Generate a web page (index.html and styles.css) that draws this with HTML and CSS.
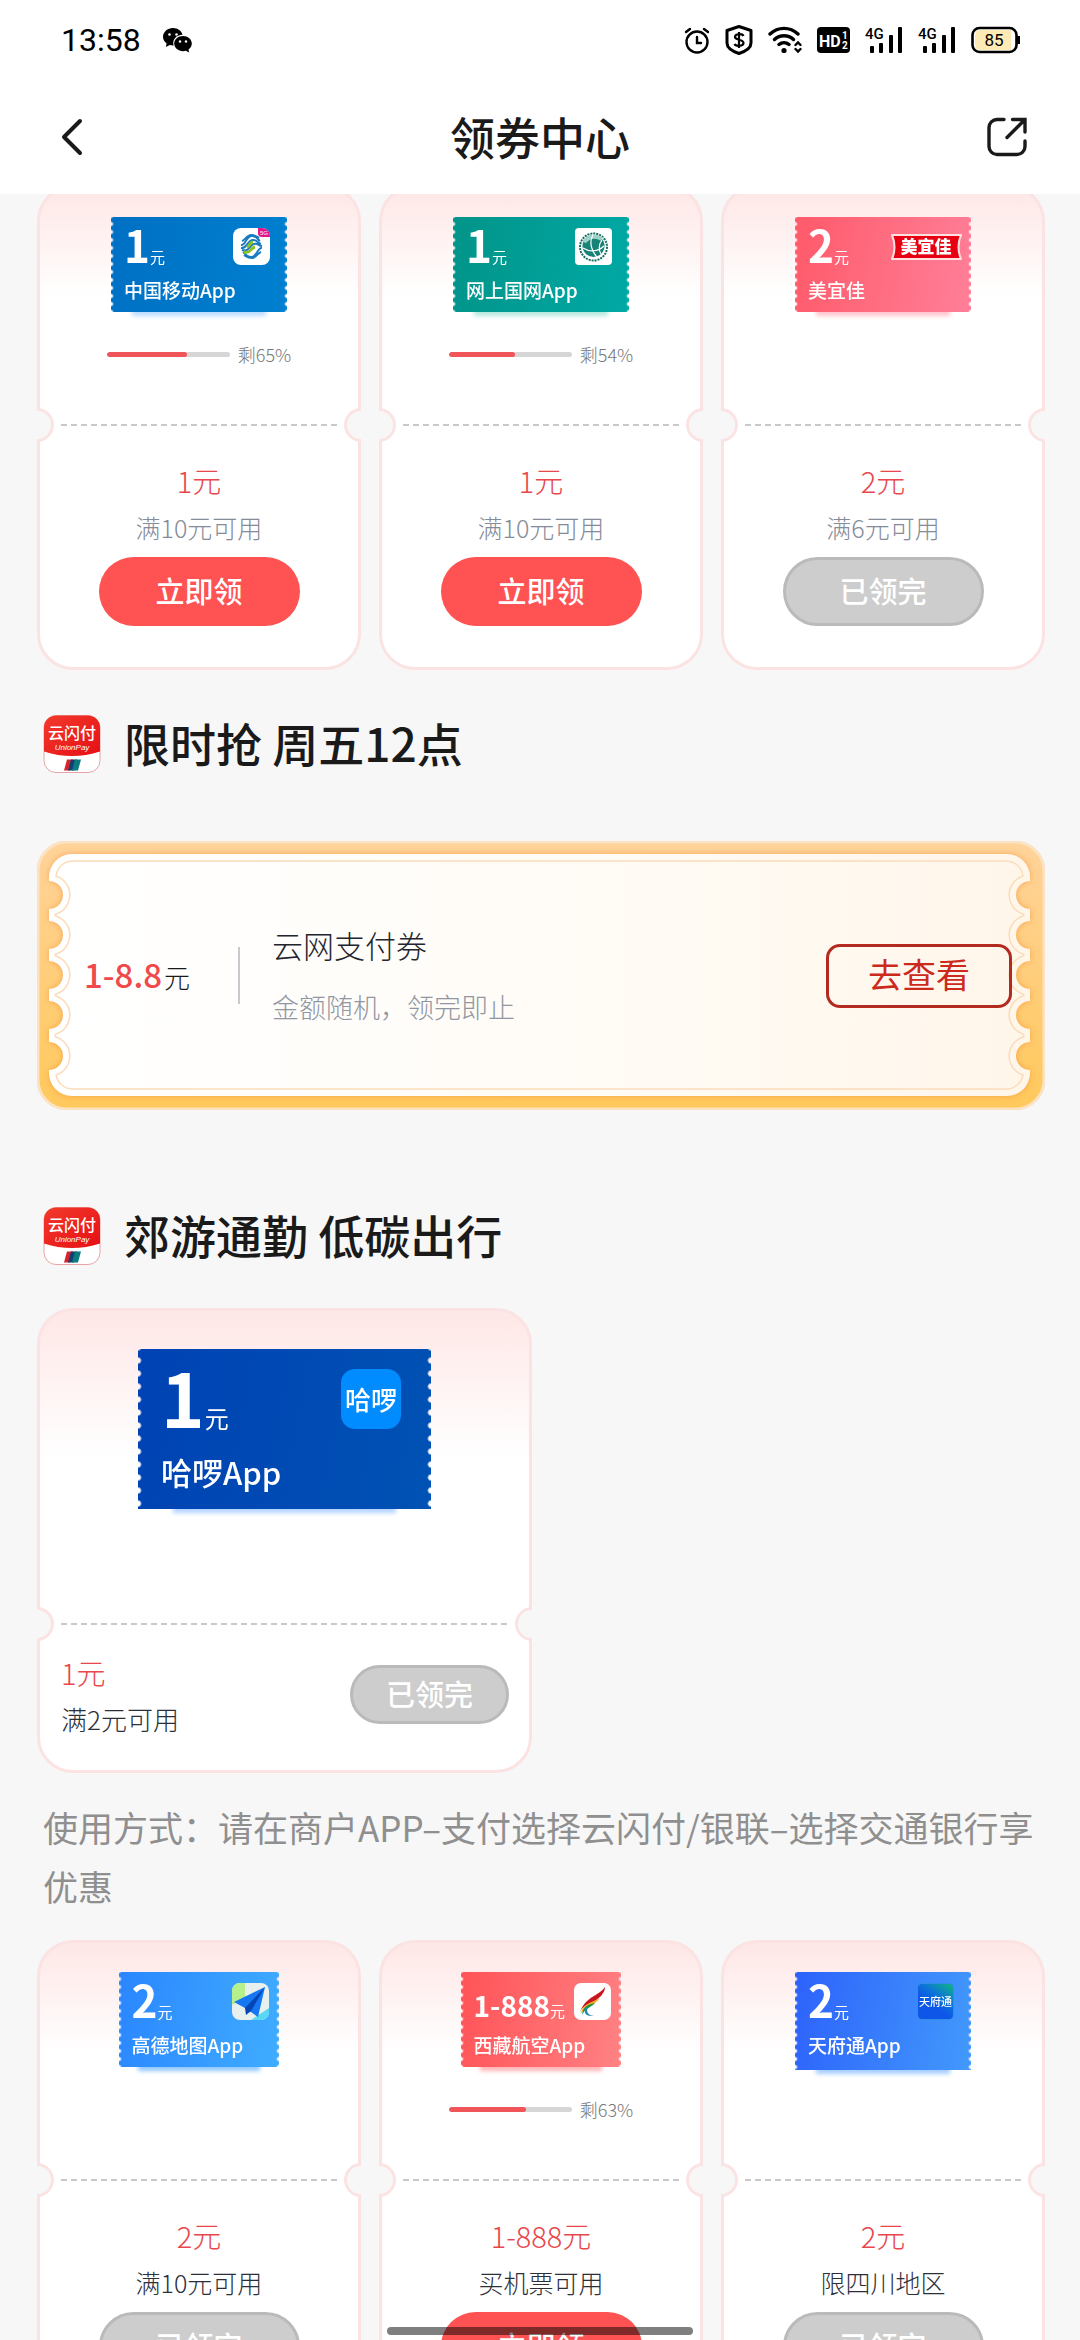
FILE: index.html
```html
<!DOCTYPE html>
<html lang="zh-CN">
<head>
<meta charset="utf-8">
<meta name="viewport" content="width=device-width, initial-scale=1">
<title>领券中心</title>
<link rel="stylesheet" href="styles.css">
</head>
<body>
<svg width="0" height="0" class="defs" aria-hidden="true">
  <defs>
    <linearGradient id="redTop" x1="0" y1="0" x2="1" y2="1"><stop offset="0" stop-color="#f23a2c"/><stop offset="1" stop-color="#e60f14"/></linearGradient>
    <symbol id="unionpay" viewBox="0 0 58 59">
      <rect x="1" y="1" width="56" height="57" rx="12" fill="#fff" stroke="#e9a5a5" stroke-width="1"/>
      <path d="M1 37V13A12 12 0 0 1 13 1H45A12 12 0 0 1 57 13V37Q29 46 1 37Z" fill="url(#redTop)"/>
      <path d="M24 45H30L27 56H21Z" fill="#d8232f"/><path d="M28 45H34L31 56H25Z" fill="#14406f"/><path d="M32 45H38L35 56H29Z" fill="#0b7b80"/>
      <text x="29" y="24" font-size="16" font-weight="500" text-anchor="middle" fill="#fff" class="svg-text">云闪付</text>
      <text x="29" y="35" font-size="8" font-style="italic" text-anchor="middle" fill="#fff" class="svg-latin">UnionPay</text>
    </symbol>
    <symbol id="signal" viewBox="0 0 38 28">
      <text x="0" y="13" font-size="15" font-weight="500" class="svg-roboto">4G</text>
      <rect x="5" y="20" width="4" height="7" rx="1"/><rect x="14" y="17" width="4" height="10" rx="1"/><rect x="24" y="9" width="4" height="18" rx="1"/><rect x="33" y="1" width="4" height="26" rx="1"/>
    </symbol>
  </defs>
</svg>

<div class="app">
  <header class="top">
    <div class="status">
      <span class="clock">13:58</span>
      <svg class="wechat" width="29" height="26" viewBox="0 0 29 26" aria-hidden="true"><path d="M10 1C4.500 1 0 5 0 9.800c0 2.700 1.400 5 3.600 6.600L2.800 20l4-2c1 .300 2 .400 3 .400h.800C9 12.500 13.500 7.800 19.500 7.700 18.500 3.800 14.600 1 10 1Z"/><path d="M20 9c-4.900 0-8.800 3.400-8.800 7.600s4 7.600 8.800 7.600c1 0 2-.100 2.900-.400l3.300 1.700-.700-2.900c2-1.400 3.300-3.600 3.300-6C28.800 12.400 24.900 9 20 9Z"/><g fill="#fff"><circle cx="6.500" cy="7.500" r="1.300"/><circle cx="13.500" cy="7.500" r="1.300"/><circle cx="17" cy="14.500" r="1.200"/><circle cx="23" cy="14.500" r="1.200"/></g></svg>
      <div class="tray">
        <svg width="26" height="28" viewBox="0 0 26 28" fill="none" stroke="#000" stroke-width="2.400" stroke-linecap="round"><circle cx="13" cy="16" r="10.500"/><path d="M2 6 6 3M24 6 20 3M13 11V17H17"/></svg>
        <svg width="28" height="30" viewBox="0 0 28 30" fill="none" stroke="#000" stroke-width="3" stroke-linejoin="round"><path d="M14 1.500 26 5.500V18C26 23 20 26.500 14 28.500 8 26.500 2 23 2 18V5.500Z"/><path d="M18.500 11C17.500 8.500 10 8.500 10 12 10 15.500 18.500 14 18.500 18 18.500 21.500 10.500 21.500 9.500 19M14 7V23" stroke-width="2.200"/></svg>
        <svg width="34" height="28" viewBox="0 0 34 28" fill="none" stroke="#000" stroke-width="3.400" stroke-linecap="round"><path d="M2 8C10 .500 22 .500 30 8M6.500 13.500C12 8.500 20 8.500 25.500 13.500M11 18.500C14 16 18 16 21 18.500"/><circle cx="16" cy="24.500" r="2.600" fill="#000" stroke="none"/><path d="M27.500 19 30 16.500 32.500 19M27.500 23 30 25.500 32.500 23" stroke-width="2.400"/></svg>
        <svg width="33" height="28" viewBox="0 0 33 28"><rect y="1" width="33" height="26" rx="4"/><text x="2" y="21" font-size="16" font-weight="700" fill="#fff" class="svg-roboto">HD</text><text x="25" y="13" font-size="10" font-weight="700" fill="#fff" class="svg-roboto">1</text><text x="25" y="23" font-size="10" font-weight="700" fill="#fff" class="svg-roboto">2</text></svg>
        <svg width="38" height="28"><use href="#signal"/></svg>
        <svg width="38" height="28"><use href="#signal"/></svg>
        <svg width="51" height="28" viewBox="0 0 51 28"><rect x="1.500" y="2" width="44" height="24" rx="7" fill="#fff" stroke="#000" stroke-width="2.600"/><path d="M9 4H40V24H9A5 5 0 0 1 4 19V9A5 5 0 0 1 9 4Z" fill="#fdeab5"/><path d="M47.500 10V18" stroke="#000" stroke-width="3"/><text x="23" y="20" font-size="17" text-anchor="middle" class="svg-roboto">85</text></svg>
      </div>
    </div>
    <nav class="nav">
      <button class="icon-btn back" aria-label="返回"><svg width="22" height="38" viewBox="0 0 22 38" fill="none" stroke="#1a1a1a" stroke-width="4" stroke-linecap="round" stroke-linejoin="round"><path d="M19 3 3 19 19 35"/></svg></button>
      <h1 class="title">领券中心</h1>
      <button class="icon-btn share" aria-label="分享"><svg width="40" height="40" viewBox="0 0 40 40" fill="none" stroke="#1a1a1a" stroke-width="3.400" stroke-linecap="round"><path d="M17 2.500H10A8 8 0 0 0 2 10.500V29.500A8 8 0 0 0 10 37.500H30A8 8 0 0 0 38 29.500V24M25.500 2.500H38V15M37 3.500 20 20.500"/></svg></button>
    </nav>
  </header>

  <main class="content">
    <div class="grid grid-first">
      <article class="card">
        <div class="card-top">
          <div class="coupon cmcc">
            <div class="face"><div class="face-row"><span class="price">1<small>元</small></span>
              <svg class="logo" width="37" height="37" viewBox="0 0 37 37"><rect width="37" height="37" rx="8" fill="#fff"/><path d="M25 0H29A8 8 0 0 1 37 8V9H29A4 4 0 0 1 25 5Z" fill="#e4148c"/><text x="27" y="7" font-size="6" fill="#fff" class="svg-latin">5G</text><g fill="none" stroke-width="2"><path d="M8 17C12 18 13 9 18 8S24 11 27 13M9 13C12 12 14 7 18 7S23 8 26 10M29 20C25 19 24 28 19 29S13 26 10 24M28 24C25 25 23 30 19 30S14 29 11 27" stroke="#1a7cc0"/><path d="M8 20C14 21 14 13 19 12S24 15 28 16M9 22C17 24 16 17 21 16S25 18 29 18" stroke="#1a7cc0"/><path d="M11 24C18 26 17 20 22 19" stroke="#8cc220" stroke-width="3"/><path d="M14 19C17 18 16 15 20 14" stroke="#8cc220" stroke-width="3"/></g></svg></div>
              <div class="brand">中国移动App</div></div>
          </div>
          <div class="stock"><progress class="bar" max="100" value="65" aria-label="剩余"></progress><span>剩65%</span></div>
        </div>
        <hr class="tear">
        <div class="card-bottom"><div class="amount">1元</div><div class="rule">满10元可用</div><button class="get">立即领</button></div>
      </article>
      <article class="card">
        <div class="card-top">
          <div class="coupon grid-co">
            <div class="face"><div class="face-row"><span class="price">1<small>元</small></span>
              <svg class="logo" width="37" height="37" viewBox="0 0 37 37"><rect width="37" height="37" rx="4" fill="#fff"/><circle cx="18.500" cy="19" r="13.500" fill="none" stroke="#126a60" stroke-width="2" stroke-dasharray="2 1"/><circle cx="18.500" cy="18" r="11" fill="#178377"/><path d="M9 14Q17 5 27 11" stroke="#9ed1c7" stroke-width="4" fill="none"/><path d="M18 7C13 15 18 25 22 29M8 20C14 24 23 24 29 18M27 12C23 17 24 23 26 26" stroke="#fff" stroke-width="1.200" fill="none"/></svg></div>
              <div class="brand">网上国网App</div></div>
          </div>
          <div class="stock"><progress class="bar" max="100" value="54" aria-label="剩余"></progress><span>剩54%</span></div>
        </div>
        <hr class="tear">
        <div class="card-bottom"><div class="amount">1元</div><div class="rule">满10元可用</div><button class="get">立即领</button></div>
      </article>
      <article class="card">
        <div class="card-top">
          <div class="coupon meiyijia">
            <div class="face"><div class="face-row"><span class="price">2<small>元</small></span>
              <svg class="logo" width="73" height="37" viewBox="0 0 73 37"><path d="M2 7H71Q66 19 71 31H2Q7 19 2 7Z" fill="#e60012" stroke="#ffe0e0" stroke-width="2" stroke-linejoin="round"/><text x="36" y="25" font-size="17" font-weight="900" text-anchor="middle" fill="#fff" class="svg-text">美宜佳</text></svg></div>
              <div class="brand">美宜佳</div></div>
          </div>
        </div>
        <hr class="tear">
        <div class="card-bottom"><div class="amount">2元</div><div class="rule">满6元可用</div><button class="get sold" disabled>已领完</button></div>
      </article>
    </div>

    <h2 class="section"><svg width="58" height="60"><use href="#unionpay"/></svg><span>限时抢 周五12点</span></h2>

    <section class="gold">
      <svg class="gold-bg" viewBox="0 0 1006 269" preserveAspectRatio="none" aria-hidden="true">
        <defs>
          <linearGradient id="goldFill" x1="0" y1="0" x2="0" y2="1"><stop offset="0" stop-color="#ffd39a"/><stop offset="1" stop-color="#ffc95c"/></linearGradient>
          <linearGradient id="paper"><stop offset="0" stop-color="#fff"/><stop offset=".5" stop-color="#fffcf7"/><stop offset="1" stop-color="#fff6ea"/></linearGradient>
          <filter id="soft" x="-5%" y="-10%" width="110%" height="120%"><feDropShadow dx="0" dy="0" stdDeviation="3" flood-color="#f08a30" flood-opacity=".6"/></filter>
        </defs>
        <rect x="1" y="1" width="1004" height="267" rx="29" fill="url(#goldFill)" stroke="#fbe2c2" stroke-width="3"/>
        <path filter="url(#soft)" fill="url(#paper)" d="M35 13H968A23 23 0 0 1 991 36V40A14 14 0 0 0 991 68V80A14 14 0 0 0 991 108V120A14 14 0 0 0 991 148V160A14 14 0 0 0 991 188V201A14 14 0 0 0 991 229V232A23 23 0 0 1 968 255H35A23 23 0 0 1 12 232V229A14 14 0 0 0 12 201V188A14 14 0 0 0 12 160V148A14 14 0 0 0 12 120V108A14 14 0 0 0 12 80V68A14 14 0 0 0 12 40V36A23 23 0 0 1 35 13Z"/>
        <path fill="none" stroke="#fbdcbb" stroke-width="1.500" d="M35 20H968A17 17 0 0 1 984 35A20 20 0 0 0 984 73L985 74L984 75A20 20 0 0 0 984 113L985 114L984 115A20 20 0 0 0 984 153L985 154L984 155A20 20 0 0 0 984 193L985 195L984 196A20 20 0 0 0 984 234A17 17 0 0 1 968 248H35A17 17 0 0 1 19 234A20 20 0 0 0 19 196L18 195L19 193A20 20 0 0 0 19 155L18 154L19 153A20 20 0 0 0 19 115L18 114L19 113A20 20 0 0 0 19 75L18 74L19 73A20 20 0 0 0 19 35A17 17 0 0 1 35 20Z"/>
      </svg>
      <div class="gold-price"><strong>1-8.8</strong><span>元</span></div>
      <div class="gold-info"><div class="gold-name">云网支付券</div><div class="gold-desc">金额随机，领完即止</div></div>
      <button class="view">去查看</button>
    </section>

    <h2 class="section section-second"><svg width="58" height="60"><use href="#unionpay"/></svg><span>郊游通勤 低碳出行</span></h2>

    <article class="card card-wide">
      <div class="card-top">
        <div class="coupon coupon-large hello">
          <div class="face"><div class="face-row"><span class="price">1<small>元</small></span><span class="hello-logo">哈啰</span></div>
            <div class="brand">哈啰App</div></div>
        </div>
      </div>
      <hr class="tear">
      <div class="card-bottom dark"><div><div class="amount">1元</div><div class="rule">满2元可用</div></div><button class="get sold" disabled>已领完</button></div>
    </article>

    <p class="note">使用方式：请在商户APP–支付选择云闪付/银联–选择交通银行享优惠</p>

    <div class="grid">
      <article class="card">
        <div class="card-top">
          <div class="coupon coupon-small amap">
            <div class="face"><div class="face-row"><span class="price">2<small>元</small></span>
              <svg class="logo" width="37" height="37" viewBox="0 0 37 37"><rect width="37" height="37" rx="8" fill="#e8f0ee"/><path d="M8 0H13V15L0 22V8A8 8 0 0 1 8 0Z" fill="#b6f08b"/><path d="M19 37 37 25V29A8 8 0 0 1 29 37Z" fill="#57d8f5"/><path d="M33 4 2 19 13 25 26 34Z" fill="#1677f2"/><path d="M33 4 13 25 14 32 19 28Z" fill="#0645b5"/></svg></div>
              <div class="brand">高德地图App</div></div>
          </div>
        </div>
        <hr class="tear">
        <div class="card-bottom dark"><div class="amount">2元</div><div class="rule">满10元可用</div><button class="get sold" disabled>已领完</button></div>
      </article>
      <article class="card">
        <div class="card-top">
          <div class="coupon coupon-small tibet">
            <div class="face"><div class="face-row"><span class="price price-range">1-888<small>元</small></span>
              <svg class="logo" width="37" height="37" viewBox="0 0 37 37"><rect width="37" height="37" rx="7" fill="#fff"/><path d="M31 4C25 13 12 13 6 29 10 20 21 20 27 13 30 9 31 7 31 4Z" fill="#c8161d"/><path d="M26 15C18 20 9 20 7 31 11 23 20 23 26 15Z" fill="#f4a71c"/><path d="M21 20C13 22 9 24 8 32 11 25 18 24 21 20Z" fill="#16934c"/><path d="M14 24C8 28 11 34 20 33 13 32 12 28 14 24Z" fill="#1789b0"/></svg></div>
              <div class="brand">西藏航空App</div></div>
          </div>
          <div class="stock"><progress class="bar" max="100" value="63" aria-label="剩余"></progress><span>剩63%</span></div>
        </div>
        <hr class="tear">
        <div class="card-bottom dark"><div class="amount">1-888元</div><div class="rule">买机票可用</div><button class="get">立即领</button></div>
      </article>
      <article class="card">
        <div class="card-top">
          <div class="coupon tianfu">
            <div class="face"><div class="face-row"><span class="price">2<small>元</small></span><span class="tianfu-logo">天府通</span></div>
              <div class="brand">天府通App</div></div>
          </div>
        </div>
        <hr class="tear">
        <div class="card-bottom dark"><div class="amount">2元</div><div class="rule">限四川地区</div><button class="get sold" disabled>已领完</button></div>
      </article>
    </div>
  </main>
  <div class="home-indicator"></div>
</div>
</body>
</html>
```
FILE: styles.css
```css
*,
*::before,
*::after { box-sizing: border-box; }

body {
  margin: 0;
  background: #f7f7f7;
  color: #1a1a1a;
  font-family: "Noto Sans CJK SC", sans-serif;
}

h1, h2, p, hr { margin: 0; }

button {
  margin: 0;
  padding: 0;
  border: 0;
  background: none;
  font-family: inherit;
}

.defs { position: absolute; }
.svg-text { font-family: "Noto Sans CJK SC", sans-serif; }
.svg-latin { font-family: "Liberation Sans", sans-serif; }
.svg-roboto { font-family: Roboto, sans-serif; }

.app {
  position: relative;
  display: flex;
  flex-direction: column;
  height: 100vh;
  overflow: hidden;
}

/* Status bar and title */
.top {
  flex: none;
  background: #fff;
}

.status {
  display: flex;
  align-items: center;
  height: 80px;
  padding: 0 58px 0 61px;
}

.clock {
  font-family: Roboto, sans-serif;
  font-size: 32px;
  line-height: 40px;
  color: #000;
}

.wechat { margin-left: 22px; }

.tray {
  display: flex;
  align-items: center;
  gap: 15px;
  margin-left: auto;
}

.nav {
  display: flex;
  align-items: center;
  justify-content: space-between;
  height: 114px;
  padding: 0 53px;
}

.icon-btn { display: flex; width: 48px; }
.back { padding-left: 8px; }
.share { justify-content: flex-end; }

.title {
  font-size: 45px;
  line-height: 60px;
  font-weight: 500;
}

/* Page body */
.content {
  flex: 1;
  min-height: 0;
  overflow: hidden;
  padding: 0 35px 0 37px;
}

.grid {
  display: grid;
  grid-template-columns: repeat(3, 1fr);
  gap: 18px;
}

.grid-first { margin-top: -9px; }

/* Ticket card */
.card {
  border: 3px solid #fce3e3;
  border-radius: 36px;
  background: linear-gradient(#fee7e6, #fff 110px);
}

.card-top {
  display: flex;
  flex-direction: column;
  align-items: center;
  height: 236px;
  padding-top: 29px;
}

.tear {
  position: relative;
  height: 2px;
  margin: 0 21px;
  border: 0;
  overflow: visible;
  background: repeating-linear-gradient(90deg, #c9c9c9 0 6px, transparent 6px 10px);
}

.tear::before,
.tear::after {
  content: "";
  position: absolute;
  top: -16px;
  width: 17px;
  height: 34px;
  border: 3px solid #fce3e3;
  background: #f7f7f7;
}

.tear::before {
  left: -24px;
  border-left: 0;
  border-radius: 0 17px 17px 0;
}

.tear::after {
  right: -24px;
  border-right: 0;
  border-radius: 17px 0 0 17px;
}

.card-bottom {
  display: flex;
  flex-direction: column;
  align-items: center;
  padding: 32px 0 41px;
  font-weight: 300;
}

.amount {
  font-size: 29px;
  line-height: 44px;
  color: #e8474c;
}

.rule {
  margin-top: 5px;
  font-size: 25px;
  line-height: 40px;
  color: #858b98;
}

.dark .rule { color: #2b2f3a; }

.get {
  width: 201px;
  height: 69px;
  margin-top: 10px;
  padding-bottom: 4px;
  border-radius: 35px;
  background: #ff5253;
  color: #fff;
  font-size: 29px;
  font-weight: 500;
  line-height: 40px;
}

.get.sold {
  border: 3px solid #bababa;
  background: #cdcdcd;
}

.stock {
  display: flex;
  align-items: center;
  gap: 8px;
  margin-top: 27px;
  font-size: 18px;
  font-weight: 300;
  line-height: 30px;
  color: #777;
}

.bar {
  width: 123px;
  height: 5px;
  border: 0;
  border-radius: 3px;
  appearance: none;
  overflow: hidden;
  background: #d6d6d6;
}

.bar::-webkit-progress-bar { background: #d6d6d6; }
.bar::-webkit-progress-value { background: #f0555a; border-radius: 3px; }

/* Coupon picture */
.coupon {
  position: relative;
  flex: none;
  width: 176px;
  height: 95px;
}

.coupon-small { width: 161px; }

.coupon::after {
  content: "";
  position: absolute;
  z-index: 0;
  left: 12%;
  right: 12%;
  bottom: -4px;
  height: 14px;
  background: var(--glow);
  filter: blur(2px);
}

.face {
  position: relative;
  z-index: 1;
  height: 100%;
  padding: 11px 17px 0 13px;
  background: linear-gradient(100deg, var(--from), var(--to));
  color: #fff;
  -webkit-mask:
    radial-gradient(circle at 0 50%, transparent 1px, #000 3px) 0 3px / 51% 8px repeat-y,
    radial-gradient(circle at 100% 50%, transparent 1px, #000 3px) 100% 3px / 51% 8px repeat-y;
}

.coupon-small .face { padding-right: 11px; }
.cmcc { --from: #0070c4; --to: #0080d0; --glow: #bcdcff; }
.grid-co { --from: #029489; --to: #00a9a5; --glow: #b5e8dd; }
.meiyijia { --from: #ff5a6a; --to: #ff7f98; --glow: #ffc4cc; }
.hello { --from: #0042b4; --to: #0052b4; --glow: #b3d3ff; }
.amap { --from: #2a86ff; --to: #40adff; --glow: #8fc8ff; }
.tibet { --from: #ff5357; --to: #ff8284; --glow: #ffb3b5; }
.tianfu { --from: #2d62fb; --to: #4299fc; --glow: #a5cdff; }
.meiyijia .face { padding-right: 8px; }
.tianfu { height: 98px; }

.face-row {
  display: flex;
  align-items: flex-start;
  justify-content: space-between;
  height: 37px;
}

.price {
  font-size: 44px;
  font-weight: 700;
  line-height: 33px;
  white-space: nowrap;
}

.price small {
  font-size: 15px;
  font-weight: 400;
  line-height: 1;
}

.price-range {
  padding-top: 6px;
  font-size: 28px;
}

.logo { display: block; flex: none; }

.brand {
  margin-top: 13px;
  font-size: 19px;
  font-weight: 500;
  line-height: 24px;
  white-space: nowrap;
}

.tianfu-logo {
  width: 37px;
  height: 37px;
  border: 1px solid #2f8fe6;
  border-radius: 5px;
  background: linear-gradient(35deg, #0d56e8 40%, #0b77d6 65%, #10b581);
  font-size: 11px;
  font-weight: 500;
  line-height: 35px;
  text-align: center;
  white-space: nowrap;
}

/* Section titles */
.section {
  display: flex;
  align-items: center;
  gap: 23px;
  margin: 44px 0 0 6px;
  font-size: 46px;
  font-weight: 500;
  line-height: 60px;
}

.section span { margin-top: -4px; }
.section-second { margin-top: 96px; }

/* Golden voucher */
.gold {
  position: relative;
  display: flex;
  align-items: center;
  height: 269px;
  margin-top: 67px;
  padding: 0 33px 0 47px;
}

.gold-bg {
  position: absolute;
  inset: 0;
  width: 100%;
  height: 100%;
}

.gold-price,
.gold-info,
.view { position: relative; }

.gold-price {
  display: flex;
  align-items: baseline;
  gap: 2px;
  width: 156px;
  border-right: 2px solid #c9cacd;
  line-height: 54px;
}

.gold-price strong {
  font-size: 33px;
  font-weight: 500;
  color: #ee4a4c;
}

.gold-price span { font-size: 26px; font-weight: 300; }
.gold-info { margin-left: 32px; font-weight: 300; }
.gold-name { font-size: 31px; line-height: 56px; color: #22252e; }
.gold-desc { margin-top: 6px; font-size: 27px; line-height: 56px; color: #9196a2; }

.view {
  width: 186px;
  height: 64px;
  margin-left: auto;
  padding-bottom: 3px;
  border: 3px solid #b32a20;
  border-radius: 14px;
  color: #cc2a1d;
  font-size: 34px;
  line-height: 54px;
}

/* Wide ticket */
.card-wide {
  width: 495px;
  max-width: 100%;
  margin-top: 42px;
  background: linear-gradient(#fee7e6, #fff 145px);
}

.card-wide .card-top { height: 312px; padding-top: 38px; }
.card-wide .card-bottom {
  flex-direction: row;
  align-items: center;
  justify-content: space-between;
  padding: 25px 20px 31px 21px;
}
.card-wide .rule { font-size: 26px; }
.card-wide .get { width: 159px; height: 59px; margin-top: 0; }

.coupon-large { width: 293px; height: 160px; }
.coupon-large .face {
  padding: 20px 30px 0 23px;
  -webkit-mask:
    radial-gradient(circle at 0 50%, transparent 2px, #000 4px) 0 5px / 51% 13px repeat-y,
    radial-gradient(circle at 100% 50%, transparent 2px, #000 4px) 100% 5px / 51% 13px repeat-y;
}
.coupon-large .face-row { height: 60px; }
.coupon-large .price { font-size: 74px; line-height: 54px; }
.coupon-large .price small { font-size: 24px; }
.coupon-large .brand { margin-top: 23px; font-size: 31px; line-height: 40px; }

.hello-logo {
  width: 60px;
  height: 60px;
  border-radius: 14px;
  background: #008cff;
  font-size: 26px;
  font-weight: 500;
  line-height: 60px;
  text-align: center;
}

.note {
  margin: 24px 0 25px 6px;
  font-size: 35px;
  font-weight: 400;
  line-height: 59px;
  color: #8f8f8f;
}

.home-indicator {
  position: absolute;
  left: 50%;
  bottom: 5px;
  width: 306px;
  height: 8px;
  border-radius: 4px;
  background: rgba(0, 0, 0, .5);
  transform: translateX(-50%);
}
```
